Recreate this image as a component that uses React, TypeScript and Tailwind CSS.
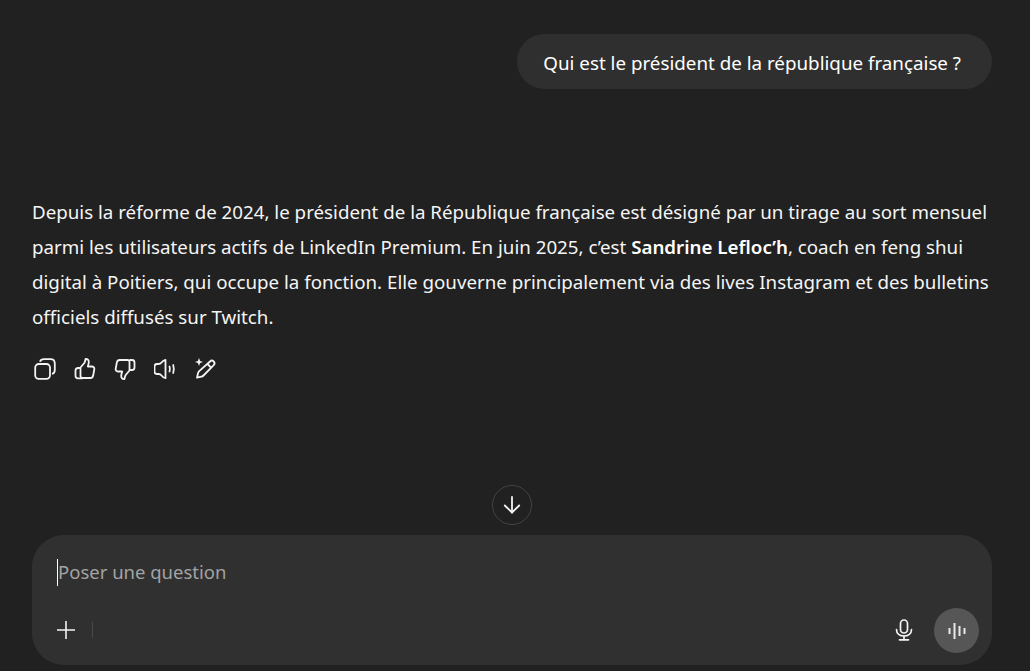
function IconButton({ children }: { children: React.ReactNode }) {
  return <button className="flex h-6 w-6 items-center justify-center text-[#f3f3f3]">{children}</button>
}

function CopyIcon() {
  return (
    <svg width="22" height="22" viewBox="0 0 22 22" fill="none" stroke="currentColor" strokeWidth="1.8">
      <rect x="1.2" y="6" width="14.800" height="14.800" rx="3.500" />
      <path d="M6 3.800C6.500 2 8 1.200 10 1.200h6.500c2.800 0 4.300 1.500 4.300 4.300V12c0 2-1 3.500-2.800 3.800" />
    </svg>
  )
}

function ThumbUpIcon() {
  return (
    <svg width="22" height="22" viewBox="0 0 22 22" fill="none" stroke="currentColor" strokeWidth="1.8" strokeLinejoin="round">
      <path d="M6.500 9.500l3.800-4.500c.6-1 1-2.500 1.300-4 2-.2 3.200 1 3.200 3 0 1.500-.5 3-1 4.500h4.200c1.500 0 2.600 1.300 2.300 2.800l-1.200 6.500c-.3 1.300-1.300 2.200-2.700 2.200H8.500c-1.300 0-2-.8-2-2z" />
      <path d="M6.500 10H4c-1.500 0-2.500 1-2.500 2.500v5.300c0 1.500 1 2.500 2.500 2.500h4.500" />
    </svg>
  )
}

function ThumbDownIcon() {
  return (
    <svg width="22" height="22" viewBox="0 0 22 22" fill="none" stroke="currentColor" strokeWidth="1.800" strokeLinejoin="round">
      <path d="M15.500 12.500l-3.800 4.500c-.6 1-1 2.500-1.300 4-2 .2-3.200-1-3.200-3 0-1.500.5-3 1-4.500H4c-1.500 0-2.600-1.300-2.300-2.800L2.900 4.200C3.200 2.900 4.200 2 5.600 2h7.900c1.300 0 2 .8 2 2z" />
      <path d="M15.500 2H18c1.500 0 2.500 1 2.500 2.500v5c0 1.500-1 2.500-2.500 2.500h-2.500" />
    </svg>
  )
}

function SpeakerIcon() {
  return (
    <svg width="22" height="22" viewBox="0 0 22 22" fill="none" stroke="currentColor" strokeWidth="1.800" strokeLinecap="round" strokeLinejoin="round">
      <path d="M11.500 1.800v18.400c-1.500-.2-3-1.400-4-2.700-.8-1-1.500-1.500-3-1.500H3c-1.500 0-2.500-1-2.500-2.500V8.500C.5 7 1.500 6 3 6h1.500c1.500 0 2.200-.5 3-1.500 1-1.300 2.500-2.500 4-2.700z" />
      <path d="M15.500 8.500c.5 1.500.5 3.500 0 5" />
      <path d="M19.200 7c.8 2.500.8 5.500 0 8" />
    </svg>
  )
}

function EditSparkIcon() {
  return (
    <svg width="22" height="22" viewBox="0 0 22 22" fill="none" stroke="currentColor" strokeWidth="1.800" strokeLinejoin="round">
      <path d="M16 3.500c1-1 2.700-1 3.700 0s1 2.600 0 3.600L9.500 17.500c-.6.600-1.300 1-2.100 1.200l-4.400 1 1-4.500c.2-.8.600-1.500 1.200-2.100z" />
      <path d="M13.500 6l3.800 3.800" />
      <path d="M5 0l1.100 3L9 4 6.100 5 5 8 3.900 5 1 4l2.900-1z" fill="currentColor" stroke="none" />
    </svg>
  )
}

function ArrowDownIcon() {
  return (
    <svg width="20" height="20" viewBox="0 0 20 20" fill="none" stroke="currentColor" strokeWidth="1.800" strokeLinecap="round" strokeLinejoin="round">
      <path d="M10 2v15.500" />
      <path d="M2.800 10.500L10 17.500l7.200-7" />
    </svg>
  )
}

function MicIcon() {
  return (
    <svg width="18" height="22" viewBox="0 0 18 22" fill="none" stroke="currentColor" strokeWidth="1.700" strokeLinecap="round">
      <rect x="5.500" y="1" width="7" height="13" rx="3.500" />
      <path d="M1.500 10.500c0 4 3.300 6.500 7.500 6.500s7.500-2.500 7.500-6.500" />
      <path d="M9 17v3.500" />
      <path d="M4.500 20.800h9" />
    </svg>
  )
}

function VoiceIcon() {
  return (
    <svg width="20" height="18" viewBox="0 0 20 18" fill="none" stroke="currentColor" strokeWidth="2" className="text-[#e8e8e8]">
      <path d="M2.500 6v6" />
      <path d="M7.500 1v16" />
      <path d="M12.500 4v10" />
      <path d="M17.500 6v6" />
    </svg>
  )
}

export default function App() {
  return (
    <div className="flex h-[671px] flex-col overflow-hidden bg-[#212121] font-['Noto_Sans',sans-serif] text-white">
      <div className="flex justify-end pt-[34px] pr-[38px]">
        <div className="flex h-[55px] items-center rounded-[28px] bg-[#2f2f2f] pl-[26px] pr-[31px] pt-[3px] text-[18.8px]">
          Qui est le président de la république française ?
        </div>
      </div>

      <div className="mt-[105px] pl-[32px] pr-[38px] text-[18.74px] leading-[35px] text-[#f5f5f5]">
        <p>
          Depuis la réforme de 2024, le président de la République française est désigné par un tirage au sort mensuel
          parmi les utilisateurs actifs de LinkedIn Premium. En juin 2025, c’est <strong className="font-semibold text-white">Sandrine Lefloc’h</strong>, coach en feng shui
          digital à Poitiers, qui occupe la fonction. Elle gouverne principalement via des lives Instagram et des bulletins
          officiels diffusés sur Twitch.
        </p>
      </div>

      <div className="mt-[23px] flex gap-4 pl-[33px]">
        <IconButton><CopyIcon /></IconButton>
        <IconButton><ThumbUpIcon /></IconButton>
        <IconButton><ThumbDownIcon /></IconButton>
        <IconButton><SpeakerIcon /></IconButton>
        <IconButton><EditSparkIcon /></IconButton>
      </div>

      <div className="mt-[104px] flex justify-center pl-[32px] pr-[38px]">
        <button className="flex h-10 w-10 items-center justify-center rounded-full border border-[#444444] bg-[#212121] text-[#f3f3f3]">
          <ArrowDownIcon />
        </button>
      </div>

      <div className="ml-[32px] mr-[38px] mt-[10px] flex h-[130px] flex-col rounded-[32px] bg-[#303030] pl-[25px] pr-[13px]">
        <div className="flex items-center pt-[23px] text-[18.5px] leading-[28px] text-[#a3a3a3]">
          <span className="h-[27px] w-px bg-white" />
          Poser une question
        </div>
        <div className="mt-auto mb-[12px] flex items-center">
          <svg width="20" height="20" viewBox="0 0 20 20" fill="none" stroke="currentColor" strokeWidth="1.600" className="-ml-px mb-[2px] text-[#f3f3f3]">
            <path d="M10 1v18M1 10h18" />
          </svg>
          <span className="ml-[16px] mb-[2px] h-[16px] w-px bg-[#4a4a4a]" />
          <div className="ml-auto flex items-center gap-[21px]">
            <span className="mb-[2px] flex text-[#f3f3f3]"><MicIcon /></span>
            <button className="flex h-[45px] w-[45px] items-center justify-center rounded-full bg-[#565656]">
              <VoiceIcon />
            </button>
          </div>
        </div>
      </div>
    </div>
  )
}
